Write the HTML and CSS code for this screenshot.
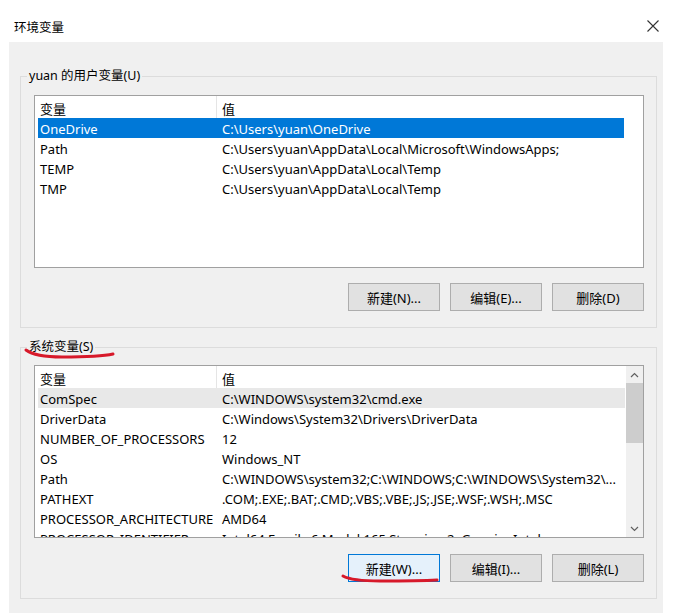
FILE: index.html
```html
<!DOCTYPE html>
<html lang="zh-CN">
<head>
<meta charset="utf-8">
<title>环境变量</title>
<link rel="stylesheet" href="styles.css">
</head>
<body>
<div class="titlebar">
  <span class="title">环境变量</span>
  <svg class="close" width="12" height="12" viewBox="0 0 12 12"><path d="M0.5 0.5 L11.5 11.5 M11.5 0.5 L0.5 11.5" stroke="#333" stroke-width="1.1" fill="none"/></svg>
</div>
<div class="panel">
  <div class="group group-user">
    <span class="group-label">yuan 的用户变量(U)</span>
    <div class="list">
      <div class="rows">
        <div class="row head"><span class="c1">变量</span><span class="c2 divider">值</span></div>
        <div class="row selected"><span class="c1">OneDrive</span><span class="c2">C:\Users\yuan\OneDrive</span></div>
        <div class="row"><span class="c1">Path</span><span class="c2">C:\Users\yuan\AppData\Local\Microsoft\WindowsApps;</span></div>
        <div class="row"><span class="c1">TEMP</span><span class="c2">C:\Users\yuan\AppData\Local\Temp</span></div>
        <div class="row"><span class="c1">TMP</span><span class="c2">C:\Users\yuan\AppData\Local\Temp</span></div>
      </div>
    </div>
    <div class="buttons">
      <button class="btn">新建(N)...</button>
      <button class="btn">编辑(E)...</button>
      <button class="btn">删除(D)</button>
    </div>
  </div>
  <div class="group group-sys">
    <span class="group-label">系统变量(S)</span>
    <div class="list">
      <div class="rows">
        <div class="row head"><span class="c1">变量</span><span class="c2 divider">值</span></div>
        <div class="row hover"><span class="c1">ComSpec</span><span class="c2">C:\WINDOWS\system32\cmd.exe</span></div>
        <div class="row"><span class="c1">DriverData</span><span class="c2">C:\Windows\System32\Drivers\DriverData</span></div>
        <div class="row"><span class="c1">NUMBER_OF_PROCESSORS</span><span class="c2">12</span></div>
        <div class="row"><span class="c1">OS</span><span class="c2">Windows_NT</span></div>
        <div class="row"><span class="c1">Path</span><span class="c2">C:\WINDOWS\system32;C:\WINDOWS;C:\WINDOWS\System32\...</span></div>
        <div class="row"><span class="c1">PATHEXT</span><span class="c2">.COM;.EXE;.BAT;.CMD;.VBS;.VBE;.JS;.JSE;.WSF;.WSH;.MSC</span></div>
        <div class="row"><span class="c1">PROCESSOR_ARCHITECTURE</span><span class="c2">AMD64</span></div>
        <div class="row"><span class="c1">PROCESSOR_IDENTIFIER</span><span class="c2">Intel64 Family 6 Model 165 Stepping 2, GenuineIntel</span></div>
      </div>
      <div class="scrollbar">
        <div class="arrow"><svg width="9" height="6" viewBox="0 0 9 6"><path d="M1 5 L4.5 1.5 L8 5" stroke="#606060" stroke-width="1.2" fill="none"/></svg></div>
        <div class="thumb"></div>
        <div class="track"></div>
        <div class="arrow"><svg width="9" height="6" viewBox="0 0 9 6"><path d="M1 1 L4.5 4.5 L8 1" stroke="#606060" stroke-width="1.2" fill="none"/></svg></div>
      </div>
    </div>
    <div class="buttons">
      <button class="btn focused">新建(W)...</button>
      <button class="btn">编辑(I)...</button>
      <button class="btn">删除(L)</button>
    </div>
  </div>
</div>
<svg class="marks" width="676" height="613" viewBox="0 0 676 613">
  <path d="M26 350 C 34 356, 48 357, 62 357 C 80 357, 100 357, 113 354" stroke="#d7192a" stroke-width="3" fill="none" stroke-linecap="round"/>
  <path d="M343 576 C 350 580, 362 581, 380 581 C 400 581, 420 581, 437 580" stroke="#d7192a" stroke-width="3" fill="none" stroke-linecap="round"/>
</svg>
</body>
</html>
```

FILE: styles.css
```css
* { box-sizing: border-box; }
html, body { margin: 0; padding: 0; }
body {
  width: 676px;
  height: 613px;
  background: #ffffff;
  font-family: "Noto Sans", "Noto Sans CJK SC", sans-serif;
  font-size: 12.5px;
  color: #000;
  position: relative;
  overflow: hidden;
}
.titlebar {
  height: 42px;
  display: flex;
  align-items: center;
  justify-content: space-between;
  padding: 0 17px 0 14px;
}
.title { font-size: 12.5px; padding-top: 11px; }
.close { margin-top: 9px; }
.panel {
  margin: 0 13px 0 9px;
  height: 571px;
  background: #f0f0f0;
  padding: 34px 6px 0 11px;
}
.group {
  position: relative;
  border: 1px solid #dcdcdc;
  padding: 18px 12px 16px 13px;
}
.group-sys { margin-top: 19px; padding: 17px 12px 16px 13px; }
.group-label {
  position: absolute;
  top: -10px;
  left: 6px;
  padding: 0 2px;
  background: #f0f0f0;
  line-height: 18px;
}
.list {
  height: 173px;
  background: #fff;
  border: 1px solid #a0a0a0;
  display: flex;
  overflow: hidden;
  font-size: 13px;
}
.rows { flex: 1; padding-left: 3px; overflow: hidden; }
.row {
  display: flex;
  height: 20px;
  line-height: 20px;
  white-space: nowrap;
}
.row span { padding-top: 1px; }
.row.head { height: 22px; line-height: 22px; }
.row.head span { padding-top: 2px; }
.c1 { width: 178px; flex: none; padding-left: 2px; overflow: hidden; }
.c2 { width: 408px; flex: none; padding-left: 6px; overflow: hidden; }
.divider { border-left: 1px solid #e5e5e5; padding-left: 5px; }
.row.selected { background: #0078d7; color: #fff; width: 586px; }
.row.hover { background: #e8e8e8; width: 587px; }
.scrollbar {
  width: 17px;
  flex: none;
  background: #f0f0f0;
  display: flex;
  flex-direction: column;
}
.arrow {
  height: 17px;
  display: flex;
  align-items: center;
  justify-content: center;
}
.thumb { height: 60px; background: #cdcdcd; }
.track { flex: 1; }
.buttons {
  display: flex;
  justify-content: flex-end;
  gap: 10px;
  margin-top: 15px;
}
.group-sys .buttons { margin-top: 16px; }
.btn {
  font: inherit;
  font-size: 13px;
  width: 92px;
  height: 28px;
  background: #e1e1e1;
  border: 1px solid #adadad;
  color: #000;
  padding: 0;
}
.btn.focused { background: #e5f1fb; border-color: #0078d7; }
.marks { position: absolute; top: 0; left: 0; pointer-events: none; }
```
